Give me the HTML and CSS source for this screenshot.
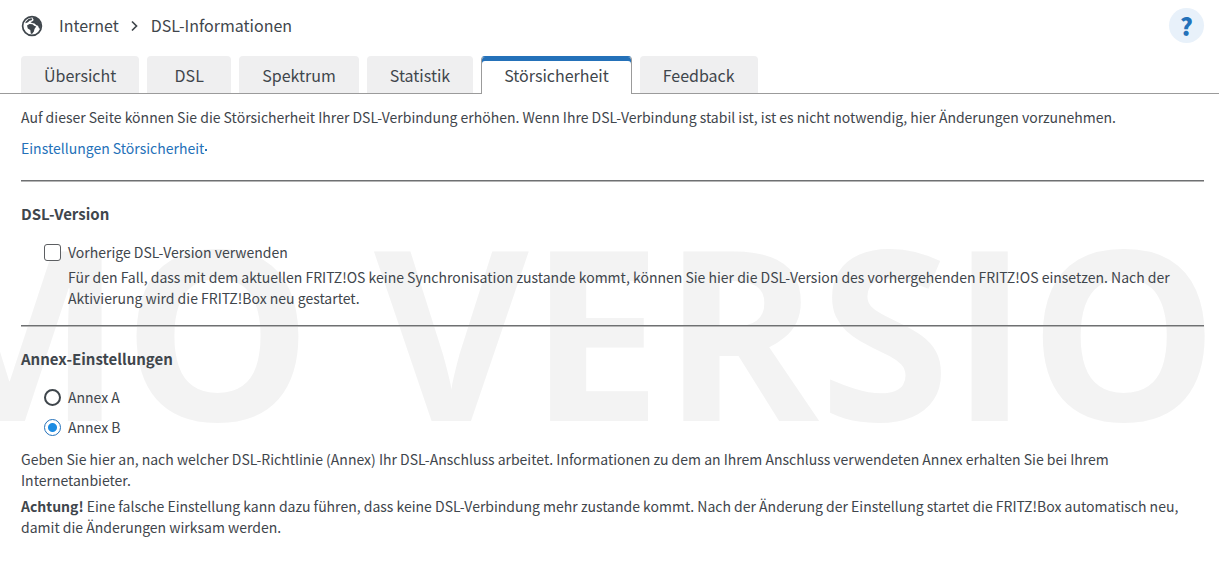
FILE: index.html
```html
<!DOCTYPE html>
<html lang="de">
<head>
    <meta charset="UTF-8">
    <meta name="viewport" content="width=device-width, initial-scale=1.0">
    <title>DSL-Informationen</title>
    <link rel="stylesheet" href="styles.css">
</head>
<body>
<div class="watermark" aria-hidden="true"><span>DEMO VERSION</span></div>

<!-- Breadcrumb and help -->
<header class="header">
    <nav class="breadcrumb">
        <svg class="globe" viewBox="0 0 22 22" aria-hidden="true">
            <circle cx="11" cy="11" r="9.400" fill="none" stroke="currentColor" stroke-width="1.700"/>
            <path fill="currentColor" d="M4.500 7 7.500 4l2.500-.8 1.500.6-1 1.400-2 .6-1.500 1.400-2.500 1z"/>
            <path fill="currentColor" d="M11.500 2.500 15 2.500l3.500 3 1.500 4-.3 3.500-1.500.8-1.200-3-1.600-.6-1.900-1.800-2.500-.5L9.500 7.200l2-.9 1.200-1.300z"/>
            <path fill="currentColor" d="M6 10.500 8.500 9l3 .3 1.700 1.500 2 .8-1.700 2.400-.6 2.500-1.900 2.500-1.200-.5-.5-3.500-2.500-1.500z"/>
        </svg>
        <a href="#">Internet</a>
        <svg class="chevron" viewBox="0 0 8 12" aria-hidden="true">
            <path d="M1 1.500l4.500 4.500L1 10.500" fill="none" stroke="currentColor" stroke-width="1.700"/>
        </svg>
        <span>DSL-Informationen</span>
    </nav>
    <button class="help" type="button" aria-label="Hilfe">?</button>
</header>

<!-- Tabs -->
<nav class="tabs">
    <button class="tab" type="button">Übersicht</button>
    <button class="tab" type="button">DSL</button>
    <button class="tab" type="button">Spektrum</button>
    <button class="tab" type="button">Statistik</button>
    <button class="tab active" type="button">Störsicherheit</button>
    <button class="tab" type="button">Feedback</button>
</nav>

<main class="content">
    <p class="intro">Auf dieser Seite können Sie die Störsicherheit Ihrer DSL-Verbindung erhöhen. Wenn Ihre DSL-Verbindung stabil ist, ist es nicht notwendig, hier Änderungen vorzunehmen.</p>
    <a class="settings-link" href="#">Einstellungen Störsicherheit</a>

    <hr>

    <h2>DSL-Version</h2>
    <div class="option">
        <input type="checkbox" id="prevVersion">
        <label for="prevVersion">Vorherige DSL-Version verwenden</label>
    </div>
    <p class="explain">Für den Fall, dass mit dem aktuellen FRITZ!OS keine Synchronisation zustande kommt, können Sie hier die DSL-Version des vorhergehenden FRITZ!OS einsetzen. Nach der Aktivierung wird die FRITZ!Box neu gestartet.</p>

    <hr>

    <h2>Annex-Einstellungen</h2>
    <div class="option">
        <input type="radio" id="annexA" name="annex">
        <label for="annexA">Annex A</label>
    </div>
    <div class="option">
        <input type="radio" id="annexB" name="annex" checked>
        <label for="annexB">Annex B</label>
    </div>
    <p class="note">Geben Sie hier an, nach welcher DSL-Richtlinie (Annex) Ihr DSL-Anschluss arbeitet. Informationen zu dem an Ihrem Anschluss verwendeten Annex erhalten Sie bei Ihrem Internetanbieter.</p>
    <p class="note"><strong>Achtung!</strong> Eine falsche Einstellung kann dazu führen, dass keine DSL-Verbindung mehr zustande kommt. Nach der Änderung der Einstellung startet die FRITZ!Box automatisch neu, damit die Änderungen wirksam werden.</p>
</main>
</body>
</html>
```
FILE: styles.css
```css
* {
    box-sizing: border-box;
}

body {
    position: relative;
    min-height: 100vh;
    margin: 0;
    background-color: #fff;
    color: #3f464c;
    font-family: "Noto Sans CJK SC", "Open Sans", sans-serif;
    font-size: 14px;
    line-height: 21px;
}

/* Large text behind the page */
.watermark {
    position: absolute;
    z-index: -1;
    inset: 0;
    display: flex;
    align-items: flex-start;
    justify-content: flex-end;
    padding-top: 229px;
    overflow: hidden;
    color: #f3f3f3;
    font-family: "Open Sans", sans-serif;
    font-size: 238px;
    font-weight: bold;
    line-height: 200px;
    white-space: nowrap;
}

.watermark span {
    margin-right: -193px;
}

/* Header */
.header {
    display: flex;
    align-items: center;
    justify-content: space-between;
    padding: 8px 15px 0 21px;
}

.breadcrumb {
    display: flex;
    align-items: center;
    font-size: 16px;
}

.breadcrumb a {
    color: inherit;
    text-decoration: none;
}

.globe {
    width: 22px;
    height: 22px;
    margin-right: 16px;
}

.chevron {
    width: 8px;
    height: 12px;
    margin: 0 12px;
}

.help {
    width: 35px;
    height: 35px;
    padding: 0;
    border: none;
    border-radius: 50%;
    background-color: #e8f1fa;
    color: #2471b9;
    font-family: inherit;
    font-size: 24px;
    font-weight: 900;
    line-height: 35px;
}

/* Tabs */
.tabs {
    display: flex;
    gap: 8px;
    margin-top: 13px;
    padding-left: 21px;
    border-bottom: 1px solid #9b9b9b;
}

.tab {
    min-width: 84px;
    height: 37px;
    padding: 0 23px;
    border: none;
    border-radius: 4px 4px 0 0;
    background-color: #efeff0;
    color: inherit;
    font-family: inherit;
    font-size: 16px;
}

.tab.active {
    height: 38px;
    margin-bottom: -1px;
    padding: 0 22px 2px;
    border: 1px solid #9b9b9b;
    border-top-color: #2471b9;
    border-bottom: none;
    background-color: #fff;
    box-shadow: inset 0 4px #2471b9;
}

/* Content */
.content {
    padding: 13px 15px 28px 21px;
}

p {
    margin: 0;
}

h2 {
    margin: 0;
    font-size: 15px;
    line-height: 22px;
}

hr {
    height: 2px;
    margin: 21px 0;
    border: none;
    border-top: 1px solid #6e7072;
    border-bottom: 1px solid #b5b5b5;
}

.settings-link {
    display: inline-block;
    margin-top: 10px;
    color: #2471b9;
    text-decoration: none;
}

.settings-link::after {
    content: "";
    display: inline-block;
    width: 2px;
    height: 2px;
    margin-left: 1px;
    background-color: #2471b9;
    vertical-align: middle;
}

.option {
    display: flex;
    align-items: center;
    gap: 7px;
    margin-top: 9px;
    padding-left: 23px;
}

h2 + .option {
    margin-top: 17px;
}

.option input {
    appearance: none;
    width: 17px;
    height: 17px;
    margin: 0;
    border: 1px solid #5c5e61;
    border-radius: 3px;
    background-color: #fff;
}

.option input[type="radio"] {
    border: 2px solid #3f464c;
    border-radius: 50%;
}

.option input[type="radio"]:checked {
    border: 1px solid #2471b9;
    background: radial-gradient(circle, #1c8ce3 4px, #fff 5px);
}

.explain {
    margin-top: 4px;
    padding-left: 47px;
}

.explain + hr {
    margin-top: 16px;
}

.note {
    margin-top: 5px;
}

.option + .note {
    margin-top: 11px;
}
```
